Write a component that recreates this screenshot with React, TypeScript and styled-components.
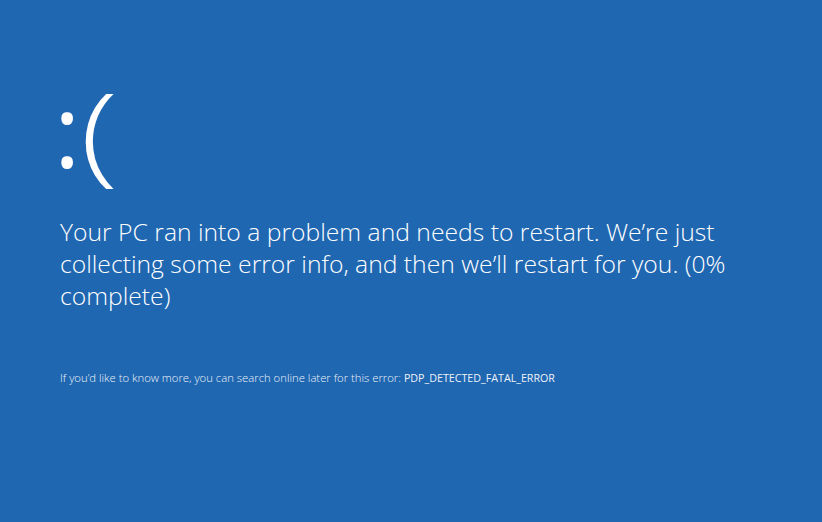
import styled, { createGlobalStyle } from "styled-components";

const GlobalStyle = createGlobalStyle`
  html, body {
    margin: 0;
    padding: 0;
    background: #2067b2;
  }
`;

const Screen = styled.div`
  width: 822px;
  height: 522px;
  box-sizing: border-box;
  background: #2067b2;
  color: #ffffff;
  font-family: "Open Sans", "Liberation Sans", sans-serif;
  font-weight: 300;
  padding: 80px 0 0 60px;
  display: flex;
  flex-direction: column;
  overflow: hidden;
`;

const Sad = styled.div`
  display: flex;
  align-items: flex-start;
  height: 118px;
`;

const Glyph = styled.span<{
  $size: number;
  $weight: number;
  $top: number;
  $left: number;
  $stretch?: number;
}>`
  display: block;
  font-size: ${(p) => p.$size}px;
  font-weight: ${(p) => p.$weight};
  line-height: 1;
  margin-top: ${(p) => p.$top}px;
  margin-left: ${(p) => p.$left}px;
  transform: scaleX(${(p) => p.$stretch ?? 1});
  transform-origin: left center;
`;

const Message = styled.p`
  margin: 18px 0 0;
  font-size: 24.7px;
  line-height: 32px;
  width: 690px;
`;

const Info = styled.p`
  margin: 58px 0 0;
  font-size: 11.3px;
  line-height: 16px;
  opacity: 0.92;
`;

const Code = styled.span`
  font-size: 10.7px;
  font-weight: 400;
  margin-left: 3px;
`;

const App = () => {
  return (
    <>
      <GlobalStyle />
      <Screen>
        <Sad>
          <Glyph $size={100} $weight={500} $top={-1} $left={-6}>
            :
          </Glyph>
          <Glyph $size={108} $weight={300} $top={-3} $left={0} $stretch={1.3}>
            (
          </Glyph>
        </Sad>
        <Message>
          Your PC ran into a problem and needs to restart. We’re just
          collecting some error info, and then we’ll restart for you. (0%
          complete)
        </Message>
        <Info>
          If you’d like to know more, you can search online later for this
          error:<Code>PDP_DETECTED_FATAL_ERROR</Code>
        </Info>
      </Screen>
    </>
  );
};

export default App;
